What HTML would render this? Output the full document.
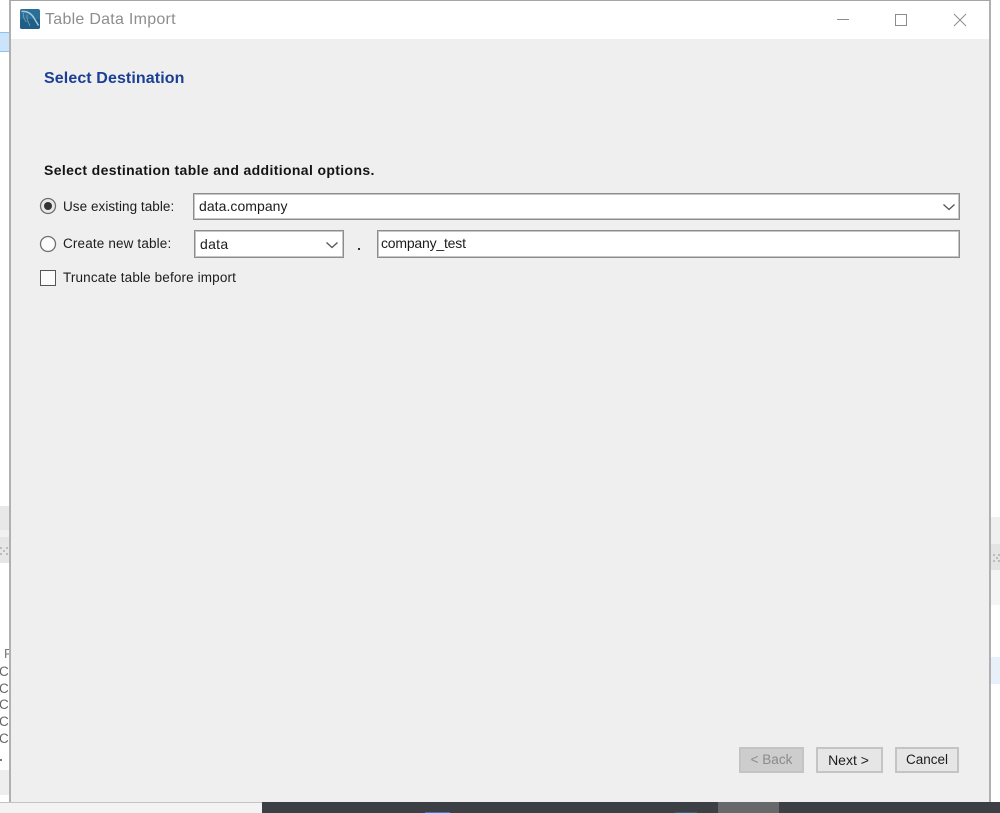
<!DOCTYPE html>
<html>
<head>
<meta charset="utf-8">
<style>
html,body{margin:0;padding:0;width:1000px;height:813px;overflow:hidden;background:#fff;font-family:"Liberation Sans",Arial,sans-serif;}
.a{position:absolute;}
.t{position:absolute;white-space:nowrap;font-size:13.5px;line-height:16px;color:#1c1c1c;}
.box{position:absolute;box-sizing:border-box;background:#fff;border:1px solid #8c8c8c;box-shadow:inset 0 0 0 1px #c6c6c6;}
.btn{position:absolute;box-sizing:border-box;border:2px solid #c4c4c4;background:#e6e6e6;text-align:center;font-size:13.5px;line-height:22px;color:#1c1c1c;}
</style>
</head>
<body>
<!-- background app pieces -->
<div class="a" style="left:0;top:32px;width:9px;height:20px;background:#cce4fb;border-top:1px solid #8cc4ee;border-bottom:1px solid #8cc4ee;box-sizing:border-box"></div>
<div class="a" style="left:0;top:506px;width:9px;height:24px;background:#e8e8e8"></div>
<div class="a" style="left:0;top:530px;width:9px;height:7px;background:#f1f1f1"></div>
<div class="a" style="left:0;top:537px;width:9px;height:26px;background:#e6e6e6"></div>
<div class="a" style="left:0;top:770px;width:9px;height:25px;background:#eeeeee"></div>
<div class="t" style="left:4px;top:646px;color:#777;font-size:13px">P</div>
<div class="t" style="left:-1px;top:664px;color:#666">C</div>
<div class="t" style="left:-1px;top:681px;color:#666">C</div>
<div class="t" style="left:-1px;top:697px;color:#666">C</div>
<div class="t" style="left:-1px;top:714px;color:#666">C</div>
<div class="t" style="left:-1px;top:731px;color:#666">C</div>
<div class="a" style="left:0;top:759px;width:2px;height:2px;background:#777"></div>
<div class="a" style="left:991px;top:517px;width:9px;height:27px;background:#f0f0f0"></div>
<div class="a" style="left:991px;top:544px;width:9px;height:26px;background:#e4e4e4"></div>
<div class="a" style="left:991px;top:570px;width:9px;height:35px;background:#f5f5f5"></div>
<div class="a" style="left:991px;top:657px;width:9px;height:27px;background:#e8f0fa"></div>
<svg class="a" style="left:0;top:545px" width="9" height="14"><g fill="#bcbcbc"><rect x="0" y="2" width="2" height="2"/><rect x="6" y="2" width="2" height="2"/><rect x="3" y="5" width="2" height="2"/><rect x="0" y="8" width="2" height="2"/><rect x="6" y="8" width="2" height="2"/></g></svg>
<svg class="a" style="left:991px;top:552px" width="9" height="12"><g fill="#bcbcbc"><rect x="2" y="2" width="2" height="2"/><rect x="7" y="2" width="2" height="2"/><rect x="5" y="5" width="2" height="2"/><rect x="2" y="8" width="2" height="2"/><rect x="7" y="8" width="2" height="2"/></g></svg>
<!-- taskbar -->
<div class="a" style="left:0;top:802px;width:262px;height:11px;background:#f3f3f3;border-top:1px solid #c4c4c4;box-sizing:border-box"></div>
<div class="a" style="left:262px;top:802px;width:738px;height:11px;background:#3c4044"></div>
<div class="a" style="left:718px;top:802px;width:61px;height:11px;background:#66686a"></div>
<div class="a" style="left:425px;top:812px;width:25px;height:1px;background:#2a7de8"></div>
<div class="a" style="left:675px;top:812px;width:22px;height:1px;background:#1f6a88"></div>
<!-- window -->
<div class="a" style="left:9px;top:0;width:982px;height:802px;box-sizing:border-box;border:2px solid #b0b0b0;border-bottom:0;border-top:1px solid #a6a6a6;background:#efefef"></div>
<div class="a" style="left:11px;top:1px;width:978px;height:38px;background:#fff"></div>
<!-- logo -->
<svg class="a" style="left:20px;top:9px" width="20" height="20" viewBox="0 0 20 20">
<rect width="20" height="20" rx="2" fill="#2a6f98"/>
<rect y="10" width="20" height="10" rx="2" fill="#1f5f86"/>
<path d="M1.500 2.500C7 2 11 4 14 9c1.500 2.500 3 5 4.500 7.500" fill="none" stroke="#a9c6d8" stroke-width="1.500"/>
<path d="M3.500 4C2.800 8 4.500 11 6.500 13M7 5.500C6.500 9 8 13 10 17" fill="none" stroke="#6f9ab4" stroke-width="1"/>
</svg>
<div class="t" style="left:45px;top:11px;font-size:16px;line-height:18px;color:#8e8e8e;letter-spacing:.27px">Table Data Import</div>
<!-- window controls -->
<svg class="a" style="left:830px;top:8px" width="145" height="24" fill="none" stroke="#8c8c8c" stroke-width="1">
<path d="M7 11.500H19"/>
<rect x="65.500" y="6.500" width="11" height="11"/>
<path d="M124 6L136 18M136 6L124 18"/>
</svg>
<!-- heading -->
<div class="t" style="left:44px;top:70px;font-size:16px;line-height:18px;font-weight:bold;color:#1a3f94;letter-spacing:.1px">Select Destination</div>
<div class="t" style="left:44px;top:162px;font-weight:bold;font-size:14px;color:#141414;letter-spacing:.36px">Select destination table and additional options.</div>
<!-- radio 1 -->
<svg class="a" style="left:39px;top:197px" width="18" height="18"><circle cx="9" cy="9" r="7.500" fill="#e8e8e8" stroke="#6e6e6e" stroke-width="1.300"/><circle cx="9" cy="9" r="4" fill="#333"/></svg>
<div class="t" style="left:63px;top:199px;letter-spacing:.05px">Use existing table:</div>
<div class="box" style="left:193px;top:193px;width:767px;height:27px"></div>
<div class="t" style="left:199px;top:198px;font-size:14px;letter-spacing:.05px">data.company</div>
<svg class="a" style="left:942px;top:203px" width="14" height="9"><path d="M1.500 1.500L7 6.500L12.500 1.500" fill="none" stroke="#555" stroke-width="1.300"/></svg>
<!-- radio 2 -->
<svg class="a" style="left:39px;top:235px" width="18" height="18"><circle cx="9" cy="9" r="7.500" fill="#fbfbfb" stroke="#6e6e6e" stroke-width="1.300"/></svg>
<div class="t" style="left:63px;top:236px;letter-spacing:.15px">Create new table:</div>
<div class="box" style="left:194px;top:230px;width:150px;height:28px"></div>
<div class="t" style="left:200px;top:236px;font-size:14px;letter-spacing:.3px">data</div>
<svg class="a" style="left:325px;top:241px" width="14" height="9"><path d="M1.500 1.500L7 6.500L12.500 1.500" fill="none" stroke="#555" stroke-width="1.300"/></svg>
<div class="a" style="left:358px;top:248px;width:2px;height:2px;background:#333"></div>
<div class="box" style="left:377px;top:230px;width:583px;height:28px"></div>
<div class="t" style="left:381px;top:235px;font-size:14px;letter-spacing:-.2px">company_test</div>
<!-- checkbox -->
<div class="a" style="left:40px;top:270px;width:16px;height:16px;box-sizing:border-box;border:1.500px solid #555;background:#fbfbfb"></div>
<div class="t" style="left:63px;top:270px;letter-spacing:.14px">Truncate table before import</div>
<!-- buttons -->
<div class="btn" style="left:739px;top:747px;width:65px;height:26px;background:#cdcdcd;color:#8a8a8a;border-color:#c4c4c4">&lt; Back</div>
<div class="btn" style="left:816px;top:747px;width:67px;height:26px;font-size:14px;padding-right:2px">Next &gt;</div>
<div class="btn" style="left:895px;top:747px;width:64px;height:26px">Cancel</div>
</body>
</html>
